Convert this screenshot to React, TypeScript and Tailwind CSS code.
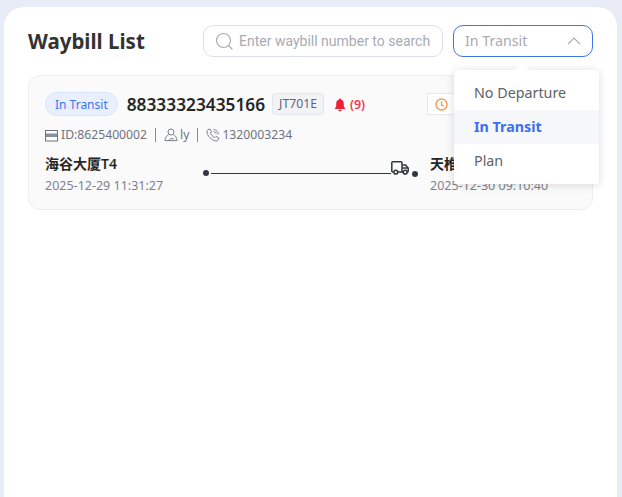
import React from "react";

const sans = "font-['Noto_Sans','Noto_Sans_CJK_SC',sans-serif]";

const SearchIcon = () => (
  <svg width="18" height="18" viewBox="0 0 18 18" fill="none" stroke="#a8abb2" strokeWidth="1.2">
    <circle cx="8.5" cy="8.5" r="7" />
    <path d="M13.5 13.5 L17 17" strokeLinecap="round" />
  </svg>
);

const Chevron = () => (
  <svg width="14" height="8" viewBox="0 0 14 8" fill="none" stroke="#a8abb2" strokeWidth="1.1">
    <path d="M1 7 L7 1 L13 7" />
  </svg>
);

const BellIcon = () => (
  <svg width="12" height="14" viewBox="0 0 12 14" fill="#ef1f3a">
    <path d="M6 0.5 C6.7 0.5 7 1 7 1.6 C9 2.2 9.8 3.8 9.8 6 L9.8 8.6 L11.5 11 L0.5 11 L2.2 8.6 L2.2 6 C2.2 3.8 3 2.2 5 1.6 C5 1 5.3 0.5 6 0.5 Z" />
    <path d="M4.4 11.8 H7.6 C7.5 12.8 6.8 13.4 6 13.4 C5.2 13.4 4.5 12.8 4.4 11.8 Z" />
  </svg>
);

const ClockIcon = () => (
  <svg width="13" height="13" viewBox="0 0 13 13" fill="none" stroke="#f5994e" strokeWidth="1.4">
    <circle cx="6.5" cy="6.5" r="5.5" />
    <path d="M6.5 3.2 V6.8 L8.6 8.2" />
  </svg>
);

const ServerIcon = () => (
  <svg width="13" height="13" viewBox="0 0 13 13" className="shrink-0">
    <rect x="0.5" y="1.5" width="12" height="10.5" fill="none" stroke="#70737f" />
    <rect x="1" y="4.5" width="11" height="3.5" fill="#8b8e99" />
  </svg>
);

const UserIcon = () => (
  <svg width="14" height="14" viewBox="0 0 14 14" fill="none" stroke="#70737f" strokeWidth="0.9" className="shrink-0">
    <circle cx="7" cy="4" r="3" />
    <path d="M4.6 6.6 C2.6 7.6 1.2 9.6 1 12.6 H13 C12.8 9.6 11.4 7.6 9.4 6.6" />
    <path d="M5 12.6 C5.4 10.8 8 10 10 11" />
  </svg>
);

const PhoneIcon = () => (
  <svg width="14" height="14" viewBox="0 0 14 14" fill="none" stroke="#70737f" strokeWidth="0.9" className="shrink-0">
    <path d="M2 1.6 L4 1 L5.6 3.8 L4.4 5 C5 6.8 6.8 8.8 8.8 9.6 L10 8.4 L12.8 10 L12.2 12 C11.8 12.8 11 13 10 13 C5.6 12.4 1.4 8 1 4 C1 3 1.2 2.2 2 1.6 Z" />
    <path d="M7.6 1.4 C10 1.6 12.2 3.8 12.6 6.2" />
    <path d="M7.6 3.6 C9 3.8 10.2 5 10.4 6.2" />
  </svg>
);

const TruckIcon = () => (
  <svg width="18" height="14" viewBox="0 0 18 14" fill="none" stroke="#333640" strokeWidth="1.5" className="shrink-0">
    <path d="M3 11 H1.8 C1.2 11 0.8 10.6 0.8 10 V1.8 C0.8 1.2 1.2 0.8 1.8 0.8 H10 C10.6 0.8 11 1.2 11 1.8 V11 H6.5" />
    <path d="M11 4 H14.5 L17.2 7 V10.4 C17.2 10.8 16.9 11 16.5 11 H15.8 M12.5 11 H11" />
    <path d="M11 7 H17" />
    <circle cx="4.8" cy="11.2" r="1.9" />
    <circle cx="14.2" cy="11.2" r="1.9" />
  </svg>
);

export default function App() {
  return (
    <div className={`h-[497px] w-[622px] overflow-hidden bg-[#e8ecf6] pl-1 pr-[5px] pt-[7px] ${sans}`}>
      <div className="h-[520px] rounded-t-[20px] bg-white px-6 pt-[18px]">
        <div className="flex h-8 items-center justify-between">
          <h1 className="text-[20.5px] font-bold leading-8 text-[#333333]">Waybill List</h1>
          <div className="flex items-center gap-[10px]">
            <div className="flex h-8 w-[240px] items-center gap-[6px] rounded-[10px] border border-[#dcdfe9] pl-[11px]">
              <SearchIcon />
              <span className="font-['Roboto',sans-serif] text-sm text-[#a8abb2]">Enter waybill number to search</span>
            </div>
            <div className="relative flex h-8 w-[140px] items-center justify-between rounded-[10px] border border-[#3e74ee] pl-[11px] pr-[11px]">
              <span className="text-[14.2px] text-[#a8abb2]">In Transit</span>
              <Chevron />
              <div className="absolute left-0 top-[44px] z-10 w-[145px] rounded bg-white py-[6px] shadow-[0_1px_10px_rgba(0,0,0,0.14)]">
                <div className="absolute -top-[5px] left-[63px] size-[10px] rotate-45 bg-white" />
                <div className="flex h-[34px] items-center px-5 text-[14.3px] text-[#606266]">No Departure</div>
                <div className="flex h-[34px] items-center bg-[#f5f7fa] px-5 text-[14.3px] font-bold text-[#3b6ff0]">In Transit</div>
                <div className="flex h-[34px] items-center px-5 text-[14.3px] text-[#606266]">Plan</div>
              </div>
            </div>
          </div>
        </div>

        <div className="mt-[18px] h-[135px] rounded-[12px] border border-[#eeeeee] bg-[#fafafa] pl-4 pt-4">
          <div className="flex h-6 items-center">
            <span className="flex h-6 items-center rounded-full border border-[#d9e4fd] bg-[#e9effe] px-[9px] pt-px text-xs text-[#3e74ee]">In Transit</span>
            <span className="ml-[9px] mt-[2px] text-[17.3px] font-semibold text-[#262626]">88333323435166</span>
            <span className="ml-[7px] flex h-[22px] items-center rounded-sm border border-[#e3e6ef] bg-[#f2f3f7] px-[6px] pt-px text-[12.2px] text-[#5f6577]">JT701E</span>
            <span className="ml-[10px] mt-[2px]"><BellIcon /></span>
            <span className="ml-1 mt-[2px] text-[12.5px] font-semibold text-[#f5384a]">(9)</span>
            <span className="ml-[62px] flex h-[22px] w-[40px] items-center border border-[#e8e8e8] bg-white pl-[7px]">
              <ClockIcon />
            </span>
          </div>

          <div className="mt-[9px] flex h-5 items-center text-[12.2px] text-[#70737f]">
            <ServerIcon />
            <span className="ml-[3px]">ID:8625400002</span>
            <span className="mx-2 h-[14px] w-px bg-[#8a8d99]" />
            <UserIcon />
            <span className="ml-[2px]">ly</span>
            <span className="mx-2 h-[14px] w-px bg-[#8a8d99]" />
            <PhoneIcon />
            <span className="ml-[2px]">1320003234</span>
          </div>

          <div className="mt-[9px] flex items-start">
            <div className="w-[157px]">
              <div className="text-sm font-semibold leading-5 text-[#262626]">海谷大厦T4</div>
              <div className="mt-[3px] text-[12.5px] leading-[18px] text-[#7f828e]">2025-12-29 11:31:27</div>
            </div>
            <div className="mt-[7px] flex w-[228px] items-end">
              <span className="-mb-px ml-[1px] size-[6px] rounded-full bg-[#333640]" />
              <span className="mb-[1px] ml-[2px] h-px w-[180px] bg-[#333640]" />
              <TruckIcon />
              <span className="-mb-[2px] ml-[3px] size-[6px] rounded-full bg-[#333640]" />
            </div>
            <div>
              <div className="text-sm font-semibold leading-5 text-[#262626]">天椎</div>
              <div className="mt-[3px] text-[12.5px] leading-[18px] text-[#7f828e]">2025-12-30 09:10:40</div>
            </div>
          </div>
        </div>
      </div>
    </div>
  );
}
